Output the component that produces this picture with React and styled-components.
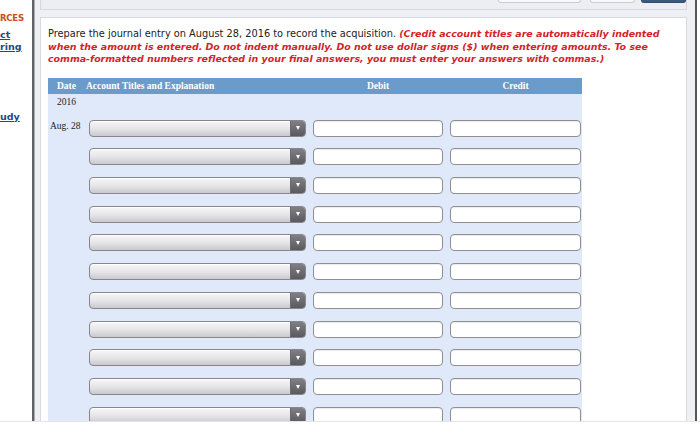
import React from 'react';
import styled, { createGlobalStyle } from 'styled-components';

const Global = createGlobalStyle`
  html, body { margin: 0; padding: 0; background: #fff; }
  body { font-family: "DejaVu Sans", Verdana, sans-serif; }
  * { box-sizing: border-box; }
`;

const Frame = styled.div`
  display: flex;
  width: 700px;
  height: 422px;
  overflow: hidden;
  border-bottom: 1px solid #e2e4e8;
`;

const Sidebar = styled.div`
  width: 32px;
  flex: none;
  overflow: hidden;
  background: #fff;
  padding-top: 12px;
  font-weight: bold;
  font-size: 9.5px;
  line-height: 12px;
  white-space: nowrap;
`;

const SideHeading = styled.div`
  color: #c9501c;
  font-size: 8.6px;
  letter-spacing: -0.3px;
`;

const SideLink = styled.a`
  display: block;
  color: #1b4b84;
  text-decoration: underline;
  margin-top: ${p => p.$gap || 0}px;
`;

const LeftRule = styled.div`
  width: 3px;
  flex: none;
  background: linear-gradient(to right, #606266 0 2px, #a9acb1 2px);
`;

const Main = styled.div`
  flex: 1;
  min-width: 0;
  background: #eef0f3;
  padding: 0 8px 0 5px;
  display: flex;
  flex-direction: column;
`;

const TopBar = styled.div`
  height: 10px;
  flex: none;
  border: 1px solid #d4d8de;
  border-top: none;
  background: #eceef1;
  display: flex;
  justify-content: flex-end;
  align-items: flex-start;
`;

const TopButton = styled.div`
  width: ${p => p.$w}px;
  height: 3px;
  margin-left: ${p => p.$ml}px;
  border: 1px solid ${p => (p.$dark ? '#2f4b6e' : '#c9cdd3')};
  border-top: none;
  border-radius: 0 0 3px 3px;
  background: ${p => (p.$dark ? '#3b5a80' : '#f8f9fb')};
`;

const RightRule = styled.div`
  width: 2px;
  flex: none;
  background: #55575b;
`;

const RightGap = styled.div`
  width: 3px;
  flex: none;
  background: #fff;
`;

const Panel = styled.div`
  margin-top: 7px;
  flex: 1;
  background: #fff;
  border: 1px solid #d6dae0;
  padding: 10px 8px 0 7px;
`;

const Prompt = styled.p`
  margin: 0;
  font-size: 9.8px;
  line-height: 12.5px;
  color: #222;
  white-space: nowrap;
`;

const Note = styled.span`
  color: #d3232a;
  font-weight: bold;
  font-style: italic;
  font-size: 9.45px;
`;

const Table = styled.div`
  margin-top: 12px;
  width: 534px;
  font-family: "Liberation Serif", "Times New Roman", serif;
  font-size: 9.5px;
`;

const columns = `
  display: grid;
  grid-template-columns: 34px 217px 130px 131px;
  column-gap: 7px;
`;

const HeaderRow = styled.div`
  ${columns}
  height: 16px;
  align-items: center;
  background: #6b9bcb;
  color: #fff;
  font-weight: bold;
`;

const HeadCell = styled.div`
  text-align: ${p => p.$align || 'left'};
  padding-left: ${p => p.$pl || 0}px;
  margin-left: ${p => p.$ml || 0}px;
  white-space: nowrap;
`;

const Body = styled.div`
  background: #dfe9f9;
  padding-bottom: 20px;
`;

const YearRow = styled.div`
  height: 17px;
  padding-left: 9px;
  line-height: 17px;
  color: #222;
  margin-bottom: 9px;
`;

const Rows = styled.div`
  display: flex;
  flex-direction: column;
  gap: 11.74px;
`;

const EntryRow = styled.div`
  ${columns}
  height: 17px;
`;

const DateCell = styled.div`
  padding-left: 2px;
  line-height: 13px;
  color: #222;
  white-space: nowrap;
`;

const SelectBox = styled.div`
  display: flex;
  height: 17px;
  border: 1px solid #86868b;
  border-radius: 4px;
  overflow: hidden;
  background: linear-gradient(#f7f7f9, #e4e4e7 55%, #c9c9ce);
  box-shadow: inset 0 1px 0 #fff;
`;

const SelectFace = styled.div`
  flex: 1;
`;

const SelectArrow = styled.div`
  width: 15px;
  flex: none;
  display: flex;
  align-items: center;
  justify-content: center;
  background: linear-gradient(#808084, #5a5a5e);
  border-left: 1px solid #6a6a6e;

  &::after {
    content: '';
    width: 0;
    height: 0;
    border-left: 2.5px solid transparent;
    border-right: 2.5px solid transparent;
    border-top: 4px solid #fff;
  }
`;

const AmountInput = styled.input`
  height: 17px;
  width: 100%;
  margin: 0;
  padding: 0 4px;
  border: 1px solid #8e8e93;
  border-radius: 4px;
  background: #fff;
  box-shadow: inset 0 1px 1px rgba(0, 0, 0, 0.08);
  font-size: 9px;
  outline: none;
`;

const rows = Array.from({ length: 12 }, (_, i) => i);

export default function App() {
  return (
    <>
      <Global />
      <Frame>
        <Sidebar>
          <SideHeading>RCES</SideHeading>
          <SideLink $gap={5}>ct<br />ring</SideLink>
          <SideLink $gap={58}>udy</SideLink>
        </Sidebar>
        <LeftRule />
        <Main>
          <TopBar>
            <TopButton $w={83} $ml={0} />
            <TopButton $w={45} $ml={9} />
            <TopButton $w={45} $ml={6} $dark />
          </TopBar>
          <Panel>
            <Prompt>
              Prepare the journal entry on August 28, 2016 to record the acquisition.{' '}
              <Note>
                (Credit account titles are automatically indented
                <br />
                when the amount is entered. Do not indent manually. Do not use dollar signs ($) when entering amounts. To see
                <br />
                comma-formatted numbers reflected in your final answers, you must enter your answers with commas.)
              </Note>
            </Prompt>
            <Table>
              <HeaderRow>
                <HeadCell $pl={9}>Date</HeadCell>
                <HeadCell $ml={-3}>Account Titles and Explanation</HeadCell>
                <HeadCell $align="center">Debit</HeadCell>
                <HeadCell $align="center">Credit</HeadCell>
              </HeaderRow>
              <Body>
                <YearRow>2016</YearRow>
                <Rows>
                  {rows.map(i => (
                    <EntryRow key={i}>
                      <DateCell>{i === 0 ? 'Aug. 28' : ''}</DateCell>
                      <SelectBox>
                        <SelectFace />
                        <SelectArrow />
                      </SelectBox>
                      <AmountInput type="text" aria-label="Debit" />
                      <AmountInput type="text" aria-label="Credit" />
                    </EntryRow>
                  ))}
                </Rows>
              </Body>
            </Table>
          </Panel>
        </Main>
        <RightRule />
        <RightGap />
      </Frame>
    </>
  );
}
